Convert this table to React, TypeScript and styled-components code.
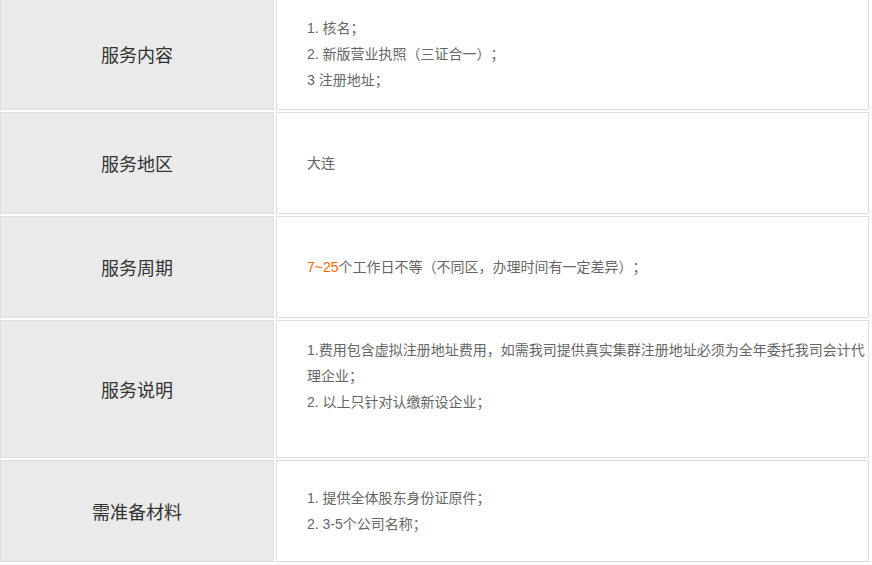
import styled, { createGlobalStyle } from "styled-components";

const GlobalStyle = createGlobalStyle`
  html, body {
    margin: 0;
    padding: 0;
    background: #fff;
    overflow: hidden;
  }
  body {
    font-family: "Liberation Sans", "Noto Sans CJK SC", sans-serif;
    text-spacing-trim: space-all;
  }
`;

const rows = [
  {
    label: "服务内容",
    lines: ["1. 核名；", "2. 新版营业执照（三证合一）；", "3 注册地址；"],
  },
  { label: "服务地区", lines: ["大连"] },
  { label: "服务周期", lines: ["__period__"] },
  {
    label: "服务说明",
    lines: [
      "1.费用包含虚拟注册地址费用，如需我司提供真实集群注册地址必须为全年委托我司会计代理企业；",
      "2. 以上只针对认缴新设企业；",
      "",
    ],
  },
  {
    label: "需准备材料",
    lines: ["1. 提供全体股东身份证原件；", "2. 3-5个公司名称；"],
  },
];

function App() {
  return (
    <>
      <GlobalStyle />
      <Table>
        {rows.map((row) => (
          <Row key={row.label}>
            <Label>{row.label}</Label>
            <Content>
              {row.lines.map((line, i) =>
                line === "__period__" ? (
                  <Line key={i}>
                    <Hot>7~25</Hot>个工作日不等（不同区，办理时间有一定差异）；
                  </Line>
                ) : (
                  <Line key={i}>{line || "\u00a0"}</Line>
                )
              )}
            </Content>
          </Row>
        ))}
      </Table>
    </>
  );
}

const Table = styled.div`
  display: grid;
  grid-template-columns: 274px 593px;
  gap: 2px;
  padding: 2px;
  margin: -4px 0 0 -2px;
`;

const Row = styled.div`
  display: contents;
`;

const Cell = styled.div`
  box-sizing: border-box;
  min-height: 102px;
  border: 1px solid #dddddd;
  display: flex;
`;

const Label = styled(Cell)`
  background: #eaeaea;
  align-items: center;
  justify-content: center;
  font-size: 18px;
  color: #333;
`;

const Content = styled(Cell)`
  background: #fff;
  flex-direction: column;
  justify-content: center;
  padding: 16px 1px 16px 30px;
  font-size: 14px;
  line-height: 26px;
  color: #666;
`;

const Line = styled.p`
  margin: 0;
`;

const Hot = styled.span`
  color: #ff6600;
`;

export default App;
